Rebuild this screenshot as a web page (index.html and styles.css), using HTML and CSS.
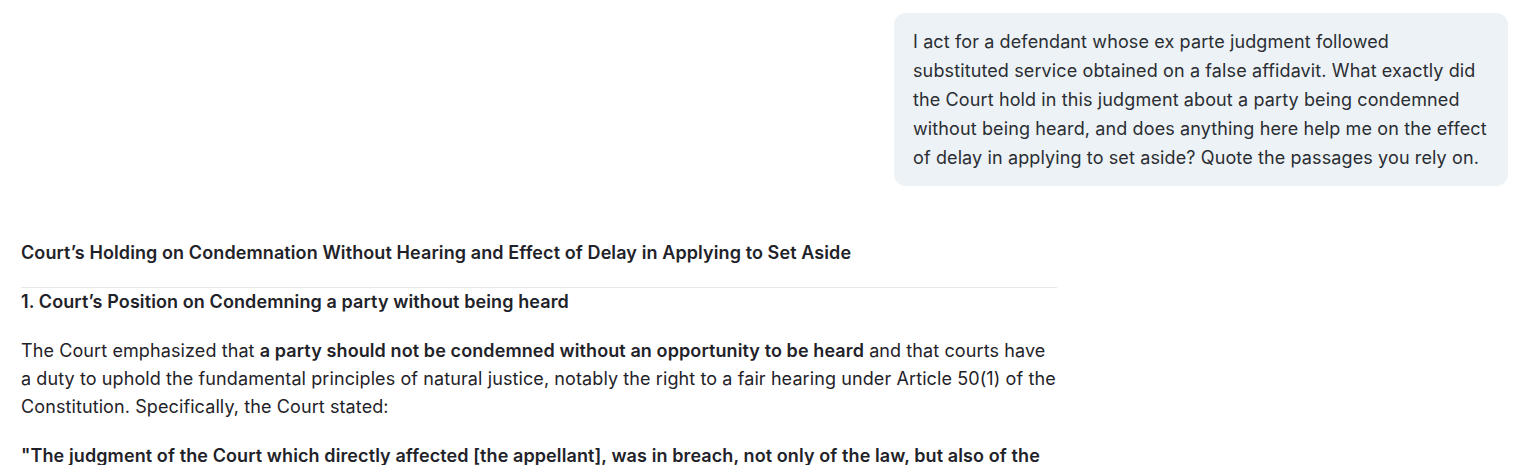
FILE: index.html
```html
<!DOCTYPE html>
<html lang="en">
<head>
<meta charset="utf-8">
<title>Chat</title>
<link rel="stylesheet" href="styles.css">
</head>
<body>
<div class="thread">
  <div class="user-row">
    <div class="bubble">I act for a defendant whose ex parte judgment followed<br>substituted service obtained on a false affidavit. What exactly did<br>the Court hold in this judgment about a party being condemned<br>without being heard, and does anything here help me on the effect<br>of delay in applying to set aside? Quote the passages you rely on.</div>
  </div>
  <div class="answer">
    <h3 class="title">Court’s Holding on Condemnation Without Hearing and Effect of Delay in Applying to Set Aside</h3>
    <hr class="rule">
    <h4 class="section">1. Court’s Position on Condemning a party without being heard</h4>
    <p class="para">The Court emphasized that <strong>a party should not be condemned without an opportunity to be heard</strong> and that courts have a duty to uphold the fundamental principles of natural justice, notably the right to a fair hearing under Article 50(1) of the Constitution. Specifically, the Court stated:</p>
    <p class="para quote"><strong>"The judgment of the Court which directly affected [the appellant], was in breach, not only of the law, but also of the Constitution, and must be set aside."</strong></p>
  </div>
</div>
</body>
</html>
```
FILE: styles.css
```css
html, body {
  margin: 0;
  padding: 0;
  background: #ffffff;
}
body {
  font-family: Inter, "Noto Sans", sans-serif;
  color: #1f2329;
  font-size: 18px;
  line-height: 28px;
}
.thread {
  display: flex;
  flex-direction: column;
}
.user-row {
  display: flex;
  justify-content: flex-end;
  padding: 13px 17px 0 0;
}
.bubble {
  background: #edf2f6;
  border-radius: 12px;
  width: 575px;
  padding: 14px 20px 14px 19px;
  line-height: 29px;
  color: #2a2e33;
  white-space: nowrap;
  letter-spacing: 0.12px;
}
.answer {
  width: 1036px;
  padding-left: 21px;
  margin-top: 53px;
}
.title {
  margin: 0;
  font-size: 18px;
  font-weight: 600;
  line-height: 28px;
  letter-spacing: 0.1px;
}
.rule {
  border: 0;
  border-top: 1px solid #e6e8eb;
  margin: 20px 0 0 0;
}
.section {
  margin: 0;
  font-size: 18px;
  font-weight: 600;
  line-height: 28px;
  letter-spacing: 0.1px;
}
.para {
  margin: 21px 0 0 0;
  letter-spacing: 0.1px;
}
.para strong {
  font-weight: 600;
}
.quote {
  margin-top: 21px;
}
```
